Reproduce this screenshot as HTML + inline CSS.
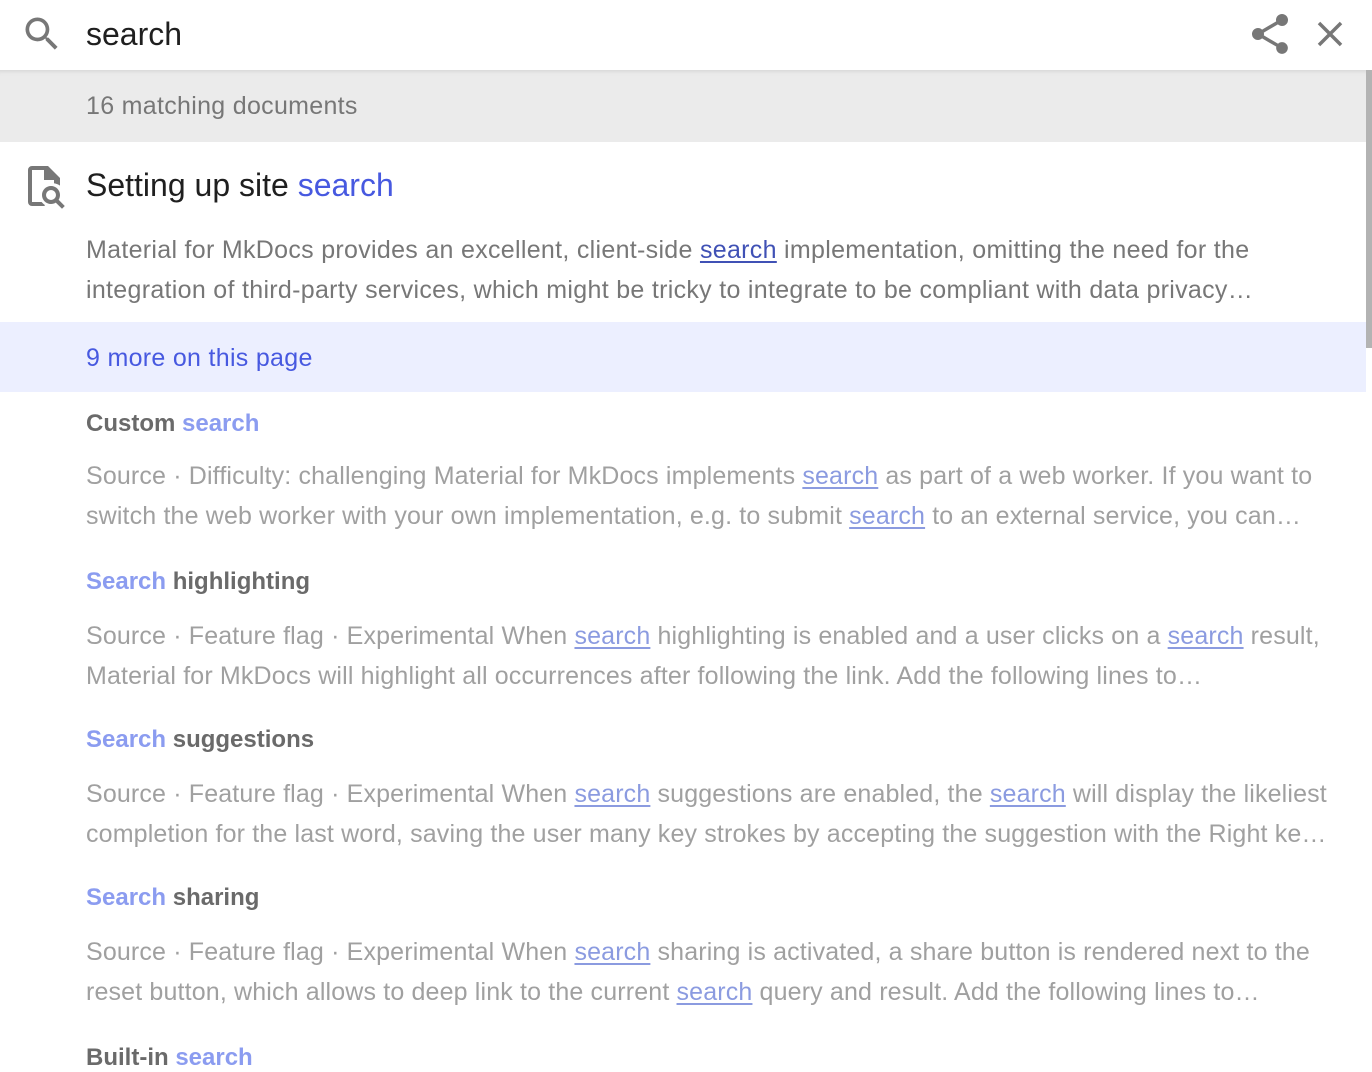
<!DOCTYPE html>
<html><head><meta charset="utf-8"><style>
*{margin:0;padding:0;box-sizing:border-box}
body{width:1372px;height:1072px;overflow:hidden;background:#fff;font-family:"Liberation Sans",Arial,sans-serif;position:relative}
.hdr{position:absolute;left:0;top:0;width:1372px;height:70px;background:#fff;z-index:2}
.hdr .q{position:absolute;left:86px;top:16px;font-size:32px;color:#1f1f1f}
.meta{position:absolute;left:0;top:70px;width:1366px;height:72px;background:#ebebeb;color:#777;font-size:25px;letter-spacing:0.3px;padding:22px 0 0 86px;box-shadow:inset 0 6px 6px -6px rgba(0,0,0,.15)}
.sb{position:absolute;left:1366px;top:70px;width:6px;height:278px;background:#b3b3b3}
.ln{position:absolute;left:86px;white-space:nowrap;font-size:25px;letter-spacing:0.3px}
.t1{top:167px;font-size:32px;letter-spacing:0;color:#1f1f1f}
.b{color:#777}
.m{color:#4759e0}
u{color:#4051b5;text-decoration:underline;text-underline-offset:3px}
.more{position:absolute;left:0;top:322px;width:1366px;height:70px;background:#ecefff;color:#4759e0;font-size:25px;letter-spacing:0.3px;padding:22px 0 0 86px}
.ft{font-weight:bold;color:#6a6a6a;font-size:24px;letter-spacing:0}
.ft span{color:#8b9cf0}
.fb{color:#a0a0a0;letter-spacing:0.15px}
.fb u{color:#8b9be0}
</style></head><body>
<div class="hdr">
<svg style="position:absolute;left:20px;top:12px" width="44" height="44" viewBox="0 0 24 24"><path fill="#777" d="M9.5 3A6.5 6.5 0 0 1 16 9.5c0 1.61-.59 3.090-1.56 4.23l.27.27h.79l5 5-1.5 1.5-5-5v-.79l-.27-.27A6.516 6.516 0 0 1 9.5 16 6.5 6.5 0 0 1 3 9.5 6.5 6.5 0 0 1 9.5 3m0 2C7 5 5 7 5 9.5S7 14 9.5 14 14 12 14 9.5 12 5 9.5 5z"/></svg>
<div class="q">search</div>
<svg style="position:absolute;left:1246px;top:10px" width="48" height="48" viewBox="0 0 24 24"><path fill="#777" d="M18 16.08c-.76 0-1.44.3-1.960.77L8.91 12.7c.05-.23.09-.46.09-.7s-.04-.47-.09-.7l7.05-4.11c.54.5 1.25.81 2.040.81a3 3 0 1 0-3-3c0 .24.04.47.09.7L8.04 9.81C7.5 9.31 6.79 9 6 9a3 3 0 1 0 0 6c.79 0 1.5-.31 2.04-.81l7.12 4.15c-.05.21-.08.43-.08.66 0 1.61 1.31 2.91 2.92 2.91s2.92-1.3 2.92-2.91A2.92 2.92 0 0 0 18 16.08z"/></svg>
<svg style="position:absolute;left:1309px;top:13px" width="42" height="42" viewBox="0 0 24 24"><path fill="#777" d="M19 6.41 17.59 5 12 10.59 6.41 5 5 6.41 10.59 12 5 17.59 6.41 19 12 13.41 17.59 19 19 17.59 13.41 12z"/></svg>
</div>
<div class="meta">16 matching documents</div>
<div class="sb"></div>
<svg style="position:absolute;left:20px;top:162px" width="48" height="48" viewBox="0 0 24 24"><path fill="#777" d="M15.5 12c2.5 0 4.5 2 4.5 4.5 0 .88-.25 1.71-.69 2.4l3.08 3.1L21 23.39l-3.12-3.07c-.69.43-1.51.68-2.38.68-2.5 0-4.5-2-4.5-4.5s2-4.5 4.5-4.5m0 2a2.5 2.5 0 0 0-2.5 2.5 2.5 2.5 0 0 0 2.5 2.5 2.5 2.5 0 0 0 2.5-2.5 2.5 2.5 0 0 0-2.5-2.5M6 2h8l6 6v3.81c-.88-.62-1.9-1.03-3-1.19V9h-5V4H6v16h4.81c.46.59 1.01 1.09 1.61 1.5L12.3 22H6a2 2 0 0 1-2-2V4a2 2 0 0 1 2-2z"/></svg>
<div class="ln t1">Setting up site <span class="m">search</span></div>
<div class="ln b" style="top:236px">Material for MkDocs provides an excellent, client-side <u>search</u> implementation, omitting the need for the</div>
<div class="ln b" style="top:276px">integration of third-party services, which might be tricky to integrate to be compliant with data privacy…</div>
<div class="more">9 more on this page</div>
<div class="ln ft" style="top:410px">Custom <span>search</span></div>
<div class="ln fb" style="top:462px">Source · Difficulty: challenging Material for MkDocs implements <u>search</u> as part of a web worker. If you want to</div>
<div class="ln fb" style="top:502px">switch the web worker with your own implementation, e.g. to submit <u>search</u> to an external service, you can…</div>
<div class="ln ft" style="top:568px"><span>Search</span> highlighting</div>
<div class="ln fb" style="top:622px">Source · Feature flag · Experimental When <u>search</u> highlighting is enabled and a user clicks on a <u>search</u> result,</div>
<div class="ln fb" style="top:662px">Material for MkDocs will highlight all occurrences after following the link. Add the following lines to…</div>
<div class="ln ft" style="top:726px"><span>Search</span> suggestions</div>
<div class="ln fb" style="top:780px">Source · Feature flag · Experimental When <u>search</u> suggestions are enabled, the <u>search</u> will display the likeliest</div>
<div class="ln fb" style="top:820px">completion for the last word, saving the user many key strokes by accepting the suggestion with the Right ke…</div>
<div class="ln ft" style="top:884px"><span>Search</span> sharing</div>
<div class="ln fb" style="top:938px">Source · Feature flag · Experimental When <u>search</u> sharing is activated, a share button is rendered next to the</div>
<div class="ln fb" style="top:978px">reset button, which allows to deep link to the current <u>search</u> query and result. Add the following lines to…</div>
<div class="ln ft" style="top:1044px">Built-in <span>search</span></div>
</body></html>
